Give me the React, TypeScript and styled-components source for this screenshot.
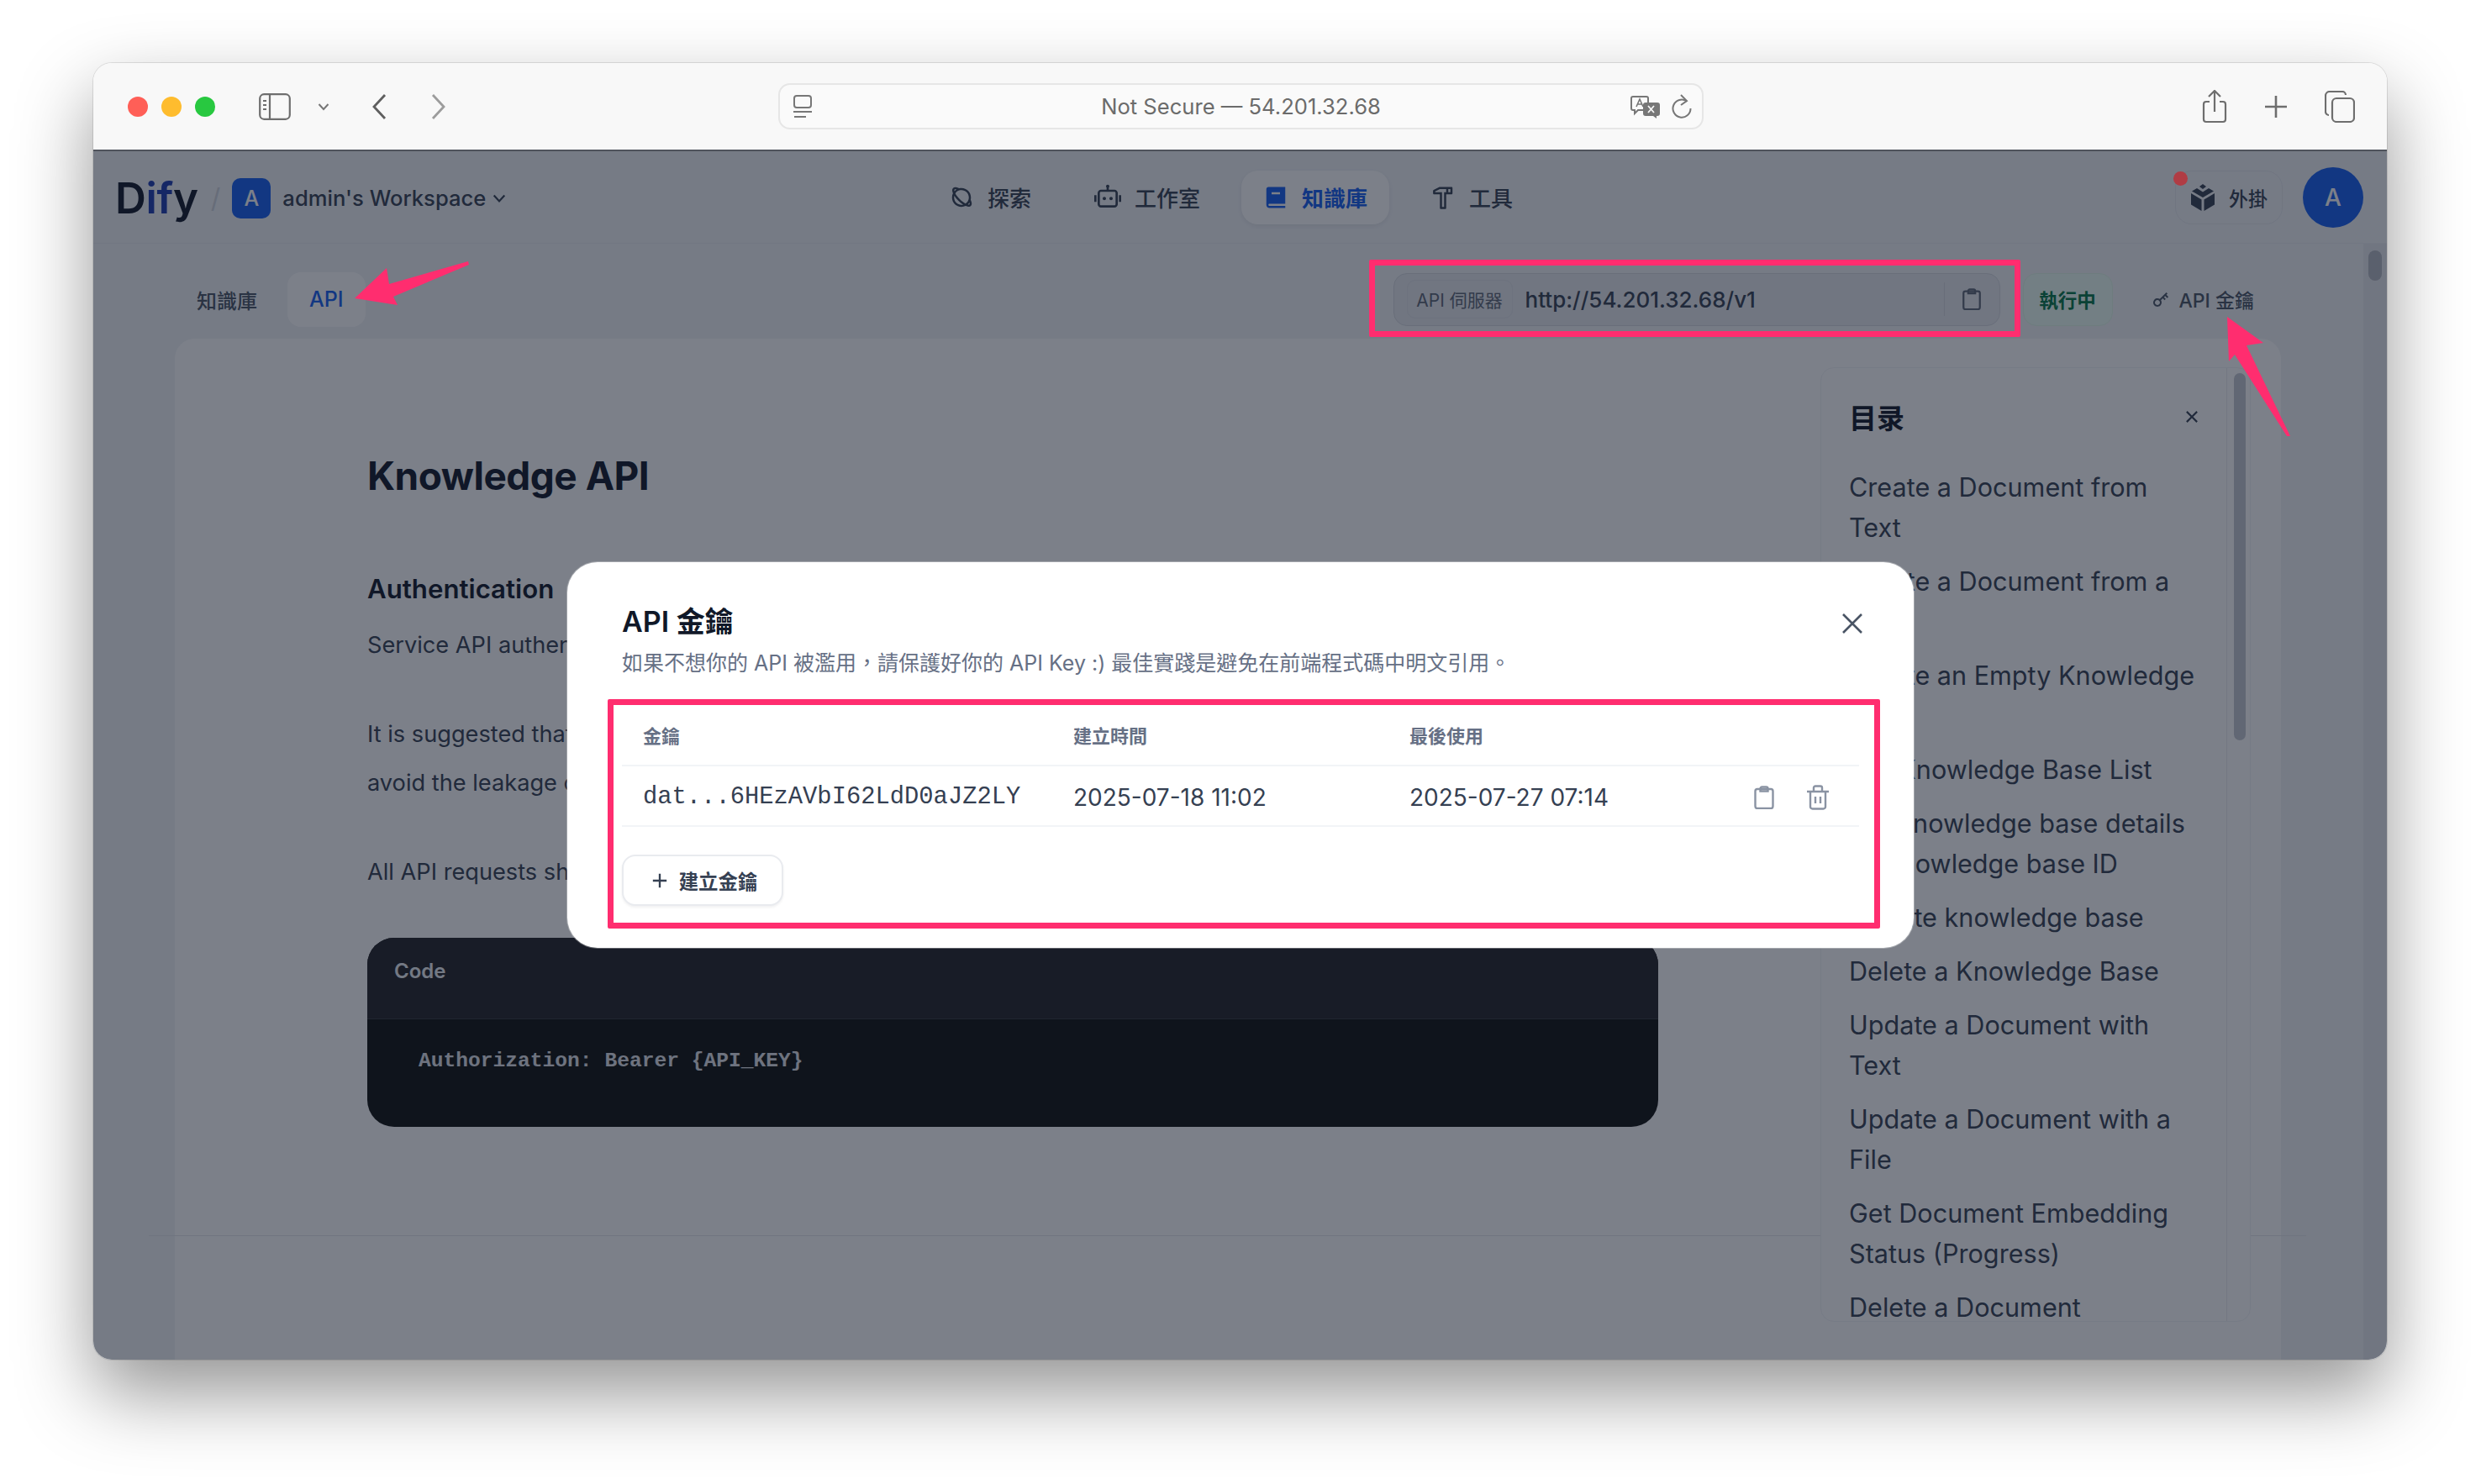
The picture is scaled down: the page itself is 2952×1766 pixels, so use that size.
import styled, { createGlobalStyle } from 'styled-components';
import {
  RiAddLine,
  RiBook2Fill,
  RiCloseLine,
  RiHammerLine,
  RiKey2Line,
  RiPlanetLine,
  RiRobot2Line,
} from 'react-icons/ri';

const FONT = `Inter, "Noto Sans CJK TC", sans-serif`;
const MONO = `"Liberation Mono", "DejaVu Sans Mono", monospace`;

const navItems = [
  { label: '探索', icon: <RiPlanetLine size={30} /> },
  { label: '工作室', icon: <RiRobot2Line size={32} /> },
  { label: '知識庫', icon: <RiBook2Fill size={30} />, active: true },
  { label: '工具', icon: <RiHammerLine size={30} /> },
];

const tocItems = [
  'Create a Document from Text',
  'Create a Document from a File',
  'Create an Empty Knowledge Base',
  'Get Knowledge Base List',
  'Get knowledge base details by knowledge base ID',
  'Update knowledge base',
  'Delete a Knowledge Base',
  'Update a Document with Text',
  'Update a Document with a File',
  'Get Document Embedding Status (Progress)',
  'Delete a Document',
];

function ClipboardIcon({ size = 28 }: { size?: number }) {
  return (
    <svg width={size} height={size} viewBox="0 0 28 28" fill="none" stroke="currentColor" strokeWidth="2.4">
      <rect x="3.5" y="4" width="21" height="23" rx="2.5" />
      <path d="M9.5 6.5V3.5a2 2 0 0 1 2-2h5a2 2 0 0 1 2 2v3z" fill="none" />
    </svg>
  );
}

function TrashIcon() {
  return (
    <svg width="28" height="30" viewBox="0 0 28 30" fill="none" stroke="currentColor" strokeWidth="2.4">
      <path d="M1 8h26M5 8v18a2.5 2.5 0 0 0 2.5 2.5h13A2.5 2.5 0 0 0 23 26V8" />
      <path d="M9 8V3.5A2 2 0 0 1 11 1.5h6a2 2 0 0 1 2 2V8M11 14v8M17 14v8" />
    </svg>
  );
}

function PluginIcon() {
  return (
    <svg width="30" height="32" viewBox="0 0 30 32" fill="currentColor">
      <path d="M15 0l4 3-4 3-4-3z" />
      <path d="M8 5l7 4.5L22 5l6 3.5-13 7.5L2 8.5z" />
      <path d="M1 11l12.5 7.5V32L1 24.5zM29 11l-12.5 7.5V32L29 24.5z" />
    </svg>
  );
}

function ChevronDown({ size = 14, color = 'currentColor' }: { size?: number; color?: string }) {
  return (
    <svg width={size} height={size} viewBox="0 0 14 14" fill="none" stroke={color} strokeWidth="2">
      <path d="M1.5 4l5.5 6 5.5-6" />
    </svg>
  );
}

export default function App() {
  return (
    <Page>
      <GlobalStyle />
      <Window>
        <Toolbar>
          <ToolsLeft>
            <Lights>
              <Light $color="#ff5f57" />
              <Light $color="#febc2e" />
              <Light $color="#28c840" />
            </Lights>
            <SidebarGlyph width="38" height="32" viewBox="0 0 38 32" fill="none" stroke="#6e6e6e" strokeWidth="2.2">
              <rect x="1.2" y="1.2" width="35.6" height="29.6" rx="5" />
              <path d="M13 1v30" />
              <path d="M5 9h4M5 14h4M5 19h4" />
            </SidebarGlyph>
            <ChevronSlot>
              <ChevronDown size={14} color="#777" />
            </ChevronSlot>
            <BackGlyph width="18" height="32" viewBox="0 0 18 32" fill="none" stroke="#5f5f5f" strokeWidth="2.8">
              <path d="M16 2L3 16l13 14" />
            </BackGlyph>
            <ForwardGlyph width="18" height="32" viewBox="0 0 18 32" fill="none" stroke="#9c9c9c" strokeWidth="2.8">
              <path d="M2 2l13 14L2 30" />
            </ForwardGlyph>
          </ToolsLeft>
          <AddressBar>
            <svg width="24" height="28" viewBox="0 0 24 28" fill="none" stroke="#777" strokeWidth="2">
              <rect x="2" y="1" width="20" height="14" rx="3" />
              <path d="M1 20h22M2 26h14" />
            </svg>
            <AddressText>Not Secure — 54.201.32.68</AddressText>
            <AddressTools>
              <svg width="36" height="30" viewBox="0 0 36 30" fill="none">
                <path d="M3 3h16a2 2 0 0 1 2 2v12a2 2 0 0 1-2 2H9l-4 4v-4H3a2 2 0 0 1-2-2V5a2 2 0 0 1 2-2z" stroke="#777" strokeWidth="2" />
                <path d="M7 15l4-9 4 9M8.5 12h5" stroke="#777" strokeWidth="1.6" />
                <path d="M18 10h14a3 3 0 0 1 3 3v10a3 3 0 0 1-3 3h-1v3l-4-3h-9a3 3 0 0 1-3-3V13a3 3 0 0 1 3-3z" fill="#777" />
                <path d="M21 14l7 8M28 14l-7 8" stroke="#f8f8f8" strokeWidth="1.8" />
              </svg>
              <svg width="24" height="30" viewBox="0 0 24 30" fill="none" stroke="#777" strokeWidth="2">
                <path d="M18 8.5A10.5 10.5 0 1 0 22.5 17" />
                <path d="M11 1l7 7-7 5" />
              </svg>
            </AddressTools>
          </AddressBar>
          <ToolsRight>
            <svg width="30" height="40" viewBox="0 0 30 40" fill="none" stroke="#6e6e6e" strokeWidth="2.2">
              <path d="M9 14H5a3 3 0 0 0-3 3v18a3 3 0 0 0 3 3h20a3 3 0 0 0 3-3V17a3 3 0 0 0-3-3h-4" />
              <path d="M15 26V2M8 8l7-7 7 7" />
            </svg>
            <svg width="28" height="28" viewBox="0 0 28 28" fill="none" stroke="#6e6e6e" strokeWidth="2.6">
              <path d="M14 1v26M1 14h26" />
            </svg>
            <svg width="36" height="38" viewBox="0 0 36 38" fill="none" stroke="#6e6e6e" strokeWidth="2.2">
              <rect x="9" y="9" width="26" height="28" rx="5" />
              <path d="M5 29a4 4 0 0 1-4-4V6a5 5 0 0 1 5-5h15a4 4 0 0 1 4 4" />
            </svg>
          </ToolsRight>
        </Toolbar>

        <AppArea>
          <Header>
            <Brand>
              <Logo>
                D<LogoAccent>if</LogoAccent>y
              </Logo>
              <Slash>/</Slash>
              <WorkspaceBadge>A</WorkspaceBadge>
              <WorkspaceName>admin's Workspace</WorkspaceName>
              <ChevronDown size={16} />
            </Brand>
            <Nav>
              {navItems.map((item) => (
                <NavItem key={item.label} $active={item.active}>
                  {item.icon}
                  {item.label}
                </NavItem>
              ))}
            </Nav>
            <HeaderRight>
              <PluginButton>
                <RedDot />
                <PluginIcon />
                外掛
              </PluginButton>
              <Avatar>A</Avatar>
            </HeaderRight>
          </Header>

          <ScrollArea>
            <Body>
              <SubRow>
                <Tabs>
                  <Tab>知識庫</Tab>
                  <Tab $active>API</Tab>
                </Tabs>
                <SubRight>
                  <ServerBox>
                    <Highlight $top={-17} $left={-30} $right={-25} $bottom={-14} />
                    <ServerLabel>API 伺服器</ServerLabel>
                    <ServerUrl>http://54.201.32.68/v1</ServerUrl>
                    <ServerCopy>
                      <ClipboardIcon size={26} />
                    </ServerCopy>
                  </ServerBox>
                  <StatusPill>執行中</StatusPill>
                  <KeyLink>
                    <RiKey2Line size={24} />
                    API 金鑰
                  </KeyLink>
                </SubRight>
              </SubRow>

              <Card>
                <Main>
                  <H1>Knowledge API</H1>
                  <H2>Authentication</H2>
                  <Para>Service API authenticates using an API-Key.</Para>
                  <Para $gap={48}>
                    It is suggested that developers store the API-Key in the backend instead of sharing or storing it in the client side to
                    <br />
                    avoid the leakage of the API-Key, which can lead to property loss.
                  </Para>
                  <Para $gap={48}>All API requests should include your API-Key in the Authorization HTTP Header, as shown below:</Para>
                  <CodeBlock>
                    <CodeHead>Code</CodeHead>
                    <CodeBody>Authorization: Bearer {'{API_KEY}'}</CodeBody>
                  </CodeBlock>
                  <FooterRule />
                </Main>
                <Toc>
                  <TocScroll>
                    <TocHead>
                      <TocTitle>目录</TocTitle>
                      <RiCloseLine size={26} />
                    </TocHead>
                    <TocList>
                      {tocItems.map((t) => (
                        <TocItem key={t}>{t}</TocItem>
                      ))}
                    </TocList>
                  </TocScroll>
                  <TocTrack>
                    <TocThumb />
                  </TocTrack>
                </Toc>
              </Card>
            </Body>
            <PageTrack>
              <PageThumb />
            </PageTrack>
          </ScrollArea>

          <Overlay />

          <Modal>
            <ModalClose width="26" height="26" viewBox="0 0 26 26" fill="none" stroke="#495464" strokeWidth="2.6">
              <path d="M2 2l22 22M24 2L2 24" />
            </ModalClose>
            <ModalTitle>API 金鑰</ModalTitle>
            <ModalSub>如果不想你的 API 被濫用，請保護好你的 API Key :) 最佳實踐是避免在前端程式碼中明文引用。</ModalSub>
            <TableRow $head>
              <HeadCell>金鑰</HeadCell>
              <HeadCell>建立時間</HeadCell>
              <HeadCell>最後使用</HeadCell>
            </TableRow>
            <TableRow>
              <KeyCell>dat...6HEzAVbI62LdD0aJZ2LY</KeyCell>
              <DateCell>2025-07-18 11:02</DateCell>
              <DateCell>2025-07-27 07:14</DateCell>
              <RowActions>
                <ClipboardIcon />
                <TrashIcon />
              </RowActions>
            </TableRow>
            <CreateButton>
              <RiAddLine size={28} />
              建立金鑰
            </CreateButton>
            <Highlight $top={163} $left={48} $right={40} $bottom={23} />
          </Modal>
        </AppArea>
      </Window>

      <Annotations viewBox="0 0 2952 1766">
        <polygon points="422,355 460,319 463,338 557,311 558,315 468,353 473,363" fill="#ff2d6f" />
        <polygon points="2650,377 2693,408 2673,411 2725,519 2721,519 2659,422 2652,430" fill="#ff2d6f" />
      </Annotations>
    </Page>
  );
}

const GlobalStyle = createGlobalStyle`
  html, body {
    margin: 0;
    padding: 0;
    background: #fff;
    font-family: ${FONT};
  }
  * { box-sizing: border-box; }
`;

const Page = styled.div`
  position: relative;
  width: 2952px;
  height: 1766px;
  padding: 75px 0 0 111px;
  overflow: hidden;
  background: #fff;
`;

const Window = styled.div`
  width: 2729px;
  height: 1543px;
  display: flex;
  flex-direction: column;
  border-radius: 22px;
  overflow: hidden;
  box-shadow: 0 0 0 1px rgba(0, 0, 0, 0.1), 0 40px 90px rgba(0, 0, 0, 0.42);
`;

const Toolbar = styled.div`
  flex: 0 0 105px;
  display: grid;
  grid-template-columns: 815px 1101px 1fr;
  align-items: center;
  background: #f8f8f8;
  border-bottom: 2px solid #4f535c;
`;

const ToolsLeft = styled.div`
  display: flex;
  align-items: center;
  padding-left: 41px;
`;

const Lights = styled.div`
  display: flex;
  gap: 16px;
`;

const Light = styled.span<{ $color: string }>`
  width: 24px;
  height: 24px;
  border-radius: 50%;
  background: ${(p) => p.$color};
`;

const SidebarGlyph = styled.svg`
  margin-left: 52px;
`;

const ChevronSlot = styled.span`
  display: flex;
  margin-left: 32px;
`;

const BackGlyph = styled.svg`
  margin-left: 50px;
`;

const ForwardGlyph = styled.svg`
  margin-left: 53px;
`;

const AddressBar = styled.div`
  height: 55px;
  display: flex;
  align-items: center;
  padding: 0 12px 0 15px;
  background: #fafafa;
  border: 2px solid #e6e6e6;
  border-radius: 14px;
`;

const AddressText = styled.span`
  flex: 1;
  padding-left: 46px;
  text-align: center;
  font-size: 25.6px;
  color: #6b6b6b;
`;

const AddressTools = styled.div`
  display: flex;
  align-items: center;
  gap: 13px;
`;

const ToolsRight = styled.div`
  display: flex;
  align-items: center;
  justify-content: flex-end;
  gap: 44px;
  padding-right: 38px;
`;

const AppArea = styled.div`
  position: relative;
  flex: 1;
  display: flex;
  flex-direction: column;
  min-height: 0;
  background: #f2f4f7;
`;

const Header = styled.div`
  flex: 0 0 110px;
  display: flex;
  align-items: center;
  padding: 0 28px 0 26px;
  border-bottom: 1px solid rgba(16, 24, 40, 0.04);
`;

const Brand = styled.div`
  width: 966px;
  padding-top: 2px;
  display: flex;
  align-items: center;
  color: #354052;
`;

const Logo = styled.span`
  font-size: 51px;
  font-weight: 600;
  letter-spacing: -0.3px;
  color: #101828;
`;

const LogoAccent = styled.span`
  color: #1c3bb0;
`;

const Slash = styled.span`
  margin-left: 15px;
  font-size: 32px;
  color: #d0d5dc;
`;

const WorkspaceBadge = styled.span`
  width: 46px;
  height: 48px;
  margin-left: 14px;
  display: flex;
  align-items: center;
  justify-content: center;
  border-radius: 10px;
  background: #155eef;
  color: #fff;
  font-size: 25px;
  font-weight: 500;
`;

const WorkspaceName = styled.span`
  margin: 0 8px 0 14px;
  font-size: 25.6px;
  font-weight: 500;
`;

const Nav = styled.nav`
  display: flex;
  gap: 23px;
`;

const NavItem = styled.div<{ $active?: boolean }>`
  height: 64px;
  padding: 0 26px;
  display: flex;
  align-items: center;
  gap: 16px;
  border-radius: 20px;
  font-size: 26px;
  font-weight: ${(p) => (p.$active ? 600 : 500)};
  color: ${(p) => (p.$active ? '#155eef' : '#354052')};
  background: ${(p) => (p.$active ? '#fff' : 'transparent')};
  box-shadow: ${(p) => (p.$active ? '0 2px 6px rgba(16, 24, 40, 0.08)' : 'none')};
`;

const HeaderRight = styled.div`
  margin-left: auto;
  display: flex;
  align-items: center;
  gap: 24px;
`;

const PluginButton = styled.div`
  position: relative;
  width: 128px;
  height: 64px;
  display: flex;
  align-items: center;
  justify-content: center;
  gap: 16px;
  border: 1px solid #e4e7ec;
  border-radius: 20px;
  font-size: 23px;
  font-weight: 500;
  color: #354052;
`;

const RedDot = styled.span`
  position: absolute;
  top: 0;
  left: -3px;
  z-index: 6;
  width: 17px;
  height: 17px;
  border-radius: 50%;
  background: #b03c44;
`;

const Avatar = styled.div`
  width: 72px;
  height: 72px;
  display: flex;
  align-items: center;
  justify-content: center;
  border-radius: 50%;
  background: #155eef;
  color: #fff;
  font-size: 28px;
  font-weight: 500;
`;

const ScrollArea = styled.div`
  flex: 1;
  min-height: 0;
  display: flex;
`;

const Body = styled.div`
  flex: 1;
  min-width: 0;
  padding: 0 98px 0 97px;
  display: flex;
  flex-direction: column;
  overflow: hidden;
`;

const SubRow = styled.div`
  flex: 0 0 113px;
  display: flex;
  align-items: center;
  padding-top: 19px;
`;

const Tabs = styled.div`
  display: flex;
  align-items: center;
  gap: 10px;
`;

const Tab = styled.div<{ $active?: boolean }>`
  height: 65px;
  padding: 0 26px;
  display: flex;
  align-items: center;
  border-radius: 16px;
  font-size: ${(p) => (p.$active ? 25 : 24)}px;
  font-weight: 500;
  color: ${(p) => (p.$active ? '#155eef' : '#495464')};
  background: ${(p) => (p.$active ? '#fff' : 'transparent')};
`;

const SubRight = styled.div`
  margin-left: auto;
  display: flex;
  align-items: center;
  padding-right: 32px;
`;

const ServerBox = styled.div`
  position: relative;
  width: 722px;
  height: 63px;
  display: flex;
  align-items: center;
  padding-left: 15px;
  background: #e6e8ed;
  border: 1px solid #d5d8de;
  border-radius: 16px;
`;

const ServerLabel = styled.span`
  width: 126px;
  height: 46px;
  display: flex;
  align-items: center;
  justify-content: center;
  border: 1px solid #dde0e6;
  border-radius: 10px;
  font-size: 21px;
  color: #5d6675;
`;

const ServerUrl = styled.span`
  margin-left: 15px;
  flex: 1;
  font-size: 26px;
  font-weight: 500;
  color: #354052;
`;

const ServerCopy = styled.span`
  width: 66px;
  height: 40px;
  display: flex;
  align-items: center;
  justify-content: center;
  border-left: 1px solid #d5d8de;
  color: #5d6675;
`;

const StatusPill = styled.div`
  width: 107px;
  height: 63px;
  margin-left: 27px;
  display: flex;
  align-items: center;
  justify-content: center;
  background: #ecfdf3;
  border: 1px solid #dff5e7;
  border-radius: 16px;
  font-size: 22.5px;
  font-weight: 600;
  color: #067647;
`;

const KeyLink = styled.div`
  margin-left: 45px;
  display: flex;
  align-items: center;
  gap: 10px;
  font-size: 23px;
  font-weight: 500;
  color: #495464;
`;

const Card = styled.div`
  flex: 1;
  min-height: 0;
  display: flex;
  justify-content: space-between;
  align-items: flex-start;
  padding-right: 36px;
  background: #fff;
  border-radius: 24px 24px 0 0;
`;

const Main = styled.div`
  width: 1536px;
  margin-left: 229px;
  padding-top: 133px;
  flex: none;
`;

const H1 = styled.h1`
  margin: 0;
  font-size: 46px;
  line-height: 60px;
  font-weight: 700;
  letter-spacing: -0.5px;
  color: #101828;
`;

const H2 = styled.h2`
  margin: 83px 0 0;
  font-size: 31.2px;
  line-height: 44px;
  font-weight: 600;
  color: #101828;
`;

const Para = styled.p<{ $gap?: number }>`
  margin: ${(p) => p.$gap ?? 16}px 0 0;
  white-space: nowrap;
  font-size: 27.2px;
  line-height: 58px;
  color: #354052;
`;

const CodeBlock = styled.div`
  margin-top: 49px;
  height: 225px;
  border-radius: 32px;
  overflow: hidden;
  background: #0f100f;
`;

const CodeHead = styled.div`
  height: 97px;
  padding: 22px 32px 0;
  background: #232226;
  border-bottom: 1px solid #34353a;
  font-size: 24px;
  line-height: 36px;
  font-weight: 600;
  color: #eceff3;
`;

const CodeBody = styled.div`
  padding: 32px 0 0 61px;
  font-family: ${MONO};
  font-size: 24.6px;
  line-height: 36px;
  font-weight: 600;
  color: #dfe2e8;
`;

const FooterRule = styled.div`
  width: 2567px;
  height: 1px;
  margin: 129px 0 0 -260px;
  background: #e4e7ec;
`;

const Toc = styled.div`
  position: relative;
  flex: none;
  width: 512px;
  height: 1136px;
  margin-top: 34px;
  display: flex;
  background: #fff;
  border: 1px solid #f2f4f7;
  border-radius: 16px;
  overflow: hidden;
`;

const TocScroll = styled.div`
  flex: 1;
  min-width: 0;
  padding: 36px 28px 0 33px;
`;

const TocHead = styled.div`
  display: flex;
  align-items: center;
  justify-content: space-between;
  height: 44px;
  color: #354052;
`;

const TocTitle = styled.span`
  font-size: 33px;
  font-weight: 600;
  color: #101828;
`;

const TocList = styled.div`
  margin-top: 38px;
  width: 416px;
  display: flex;
  flex-direction: column;
  gap: 16px;
`;

const TocItem = styled.div`
  font-size: 30.6px;
  line-height: 48px;
  color: #354052;
`;

const TocTrack = styled.div`
  flex: 0 0 28px;
  padding: 6px 5px 0 8px;
  border-left: 1px solid #eaecf0;
`;

const TocThumb = styled.div`
  height: 437px;
  border-radius: 8px;
  background: #c4c8d0;
`;

const PageTrack = styled.div`
  flex: 0 0 28px;
  padding: 8px 6px 0 6px;
  background: #e7e9ee;
`;

const PageThumb = styled.div`
  height: 36px;
  border-radius: 8px;
  background: #b4b8c0;
`;

const Overlay = styled.div`
  position: absolute;
  inset: 0;
  z-index: 5;
  background: rgba(16, 24, 40, 0.55);
`;

const Modal = styled.div`
  position: absolute;
  left: 564px;
  top: 489px;
  z-index: 7;
  width: 1602px;
  height: 459px;
  padding: 49px 65px 0;
  background: #fff;
  border-radius: 36px;
  box-shadow: 0 0 0 1px rgba(255, 255, 255, 0.3);
`;

const ModalClose = styled.svg`
  position: absolute;
  top: 60px;
  right: 60px;
`;

const ModalTitle = styled.div`
  font-size: 34px;
  line-height: 44px;
  font-weight: 600;
  color: #101828;
`;

const ModalSub = styled.div`
  margin-top: 10px;
  margin-bottom: 34px;
  font-size: 25px;
  line-height: 34px;
  white-space: nowrap;
  color: #667085;
`;

const TableRow = styled.div<{ $head?: boolean }>`
  height: 72px;
  display: grid;
  grid-template-columns: 537px 400px 1fr auto;
  align-items: center;
  border-bottom: 2px solid #f2f4f7;
  padding-right: 35px;
  padding-top: ${(p) => (p.$head ? 0 : 3)}px;
  padding-bottom: ${(p) => (p.$head ? 2 : 0)}px;
`;

const HeadCell = styled.div`
  padding-left: 25px;
  font-size: 22px;
  font-weight: 600;
  color: #667085;
  &:nth-child(n + 2) {
    padding-left: 0;
  }
`;

const KeyCell = styled.div`
  padding-left: 25px;
  font-family: ${MONO};
  font-size: 28.8px;
  color: #354052;
`;

const DateCell = styled.div`
  font-size: 28px;
  color: #354052;
`;

const RowActions = styled.div`
  display: flex;
  align-items: center;
  gap: 36px;
  color: #8a93a3;
`;

const CreateButton = styled.div`
  width: 192px;
  height: 61px;
  margin-top: 33px;
  display: flex;
  align-items: center;
  justify-content: center;
  gap: 9px;
  background: #fff;
  border: 2px solid #e9ebef;
  border-radius: 16px;
  box-shadow: 0 2px 3px rgba(16, 24, 40, 0.06);
  font-size: 23.4px;
  font-weight: 600;
  color: #354052;
`;

const Highlight = styled.div<{ $top: number; $left: number; $right: number; $bottom: number }>`
  position: absolute;
  top: ${(p) => p.$top}px;
  left: ${(p) => p.$left}px;
  right: ${(p) => p.$right}px;
  bottom: ${(p) => p.$bottom}px;
  z-index: 8;
  border: 7px solid #ff2d6f;
  border-radius: 2px;
  pointer-events: none;
`;

const Annotations = styled.svg`
  position: absolute;
  top: 0;
  left: 0;
  width: 2952px;
  height: 1766px;
  z-index: 10;
  pointer-events: none;
`;
